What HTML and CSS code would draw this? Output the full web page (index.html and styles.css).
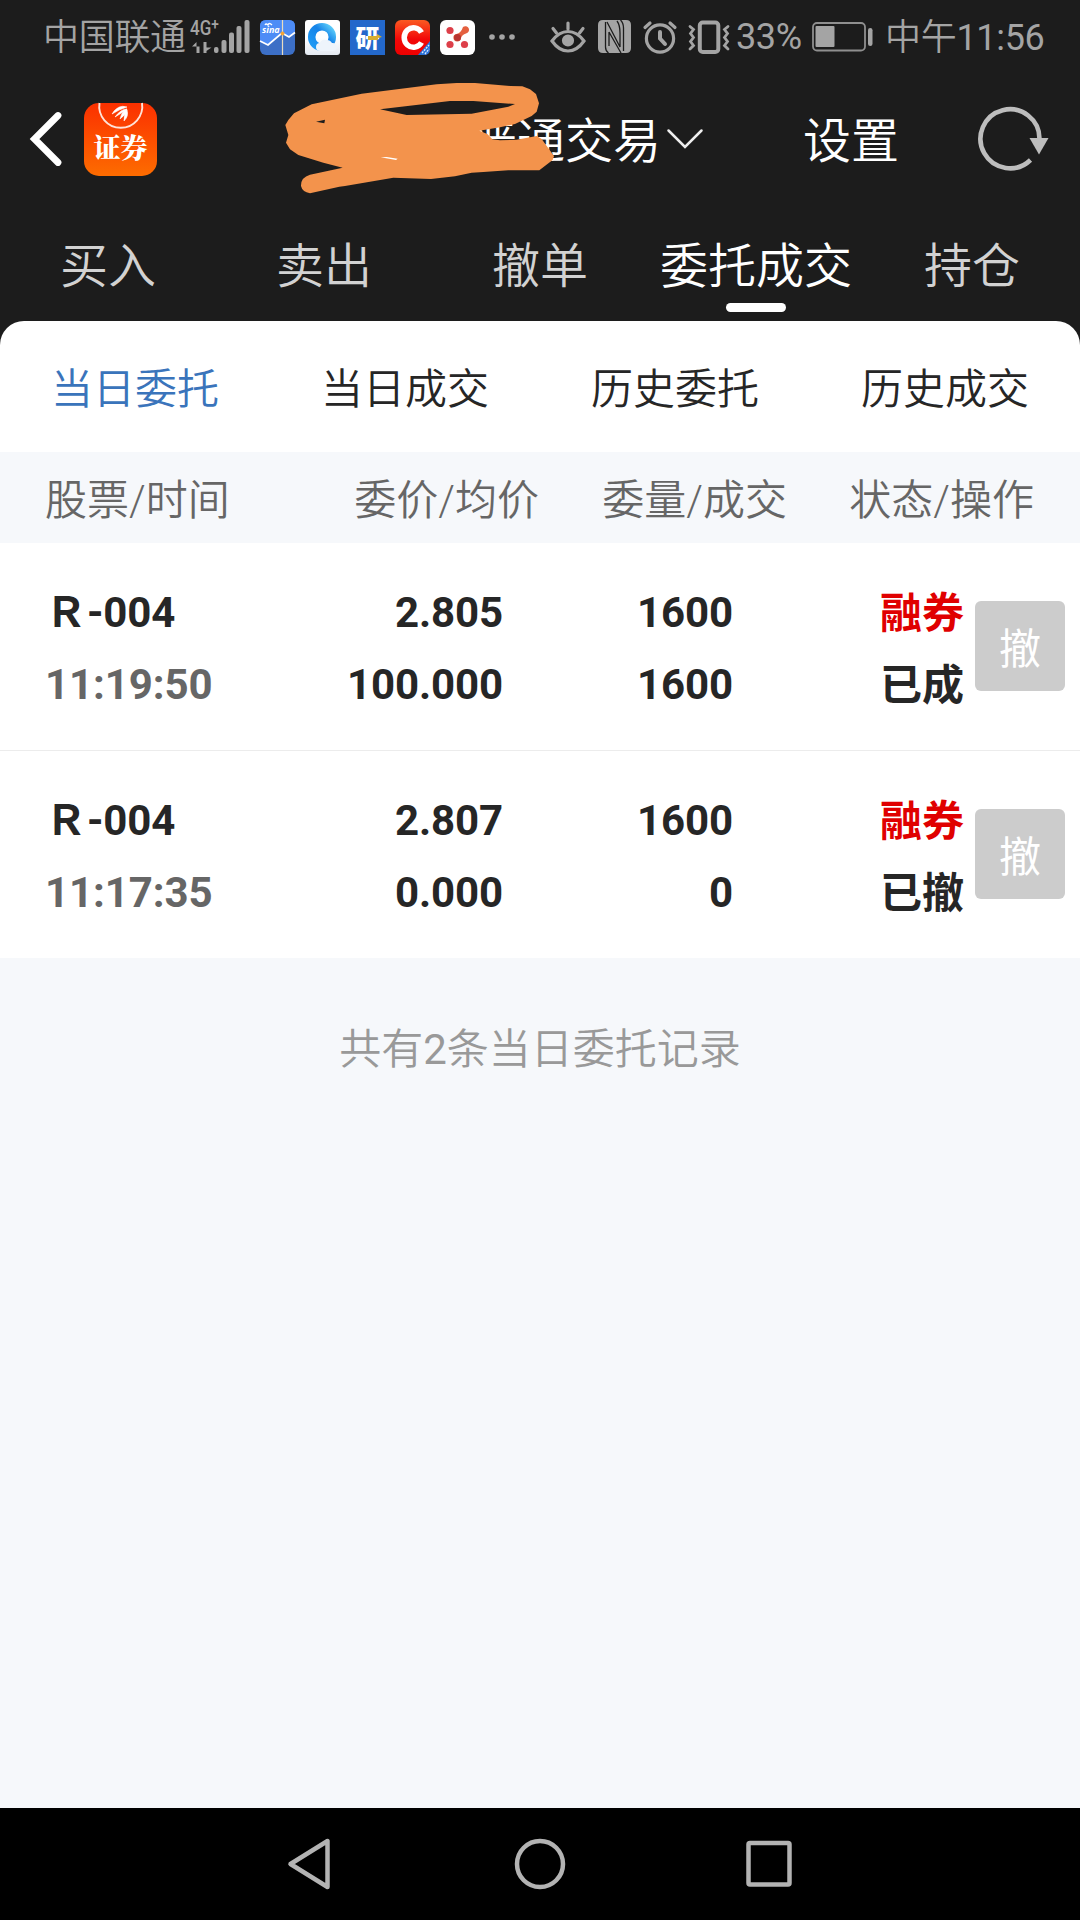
FILE: index.html
```html
<!DOCTYPE html>
<html lang="zh-CN">
<head>
<meta charset="utf-8">
<title>委托成交</title>
<link rel="stylesheet" href="styles.css">
</head>
<body>
<div class="screen">
  <header class="top">
    <div class="status">
      <div class="status-left">
        <span class="carrier">中国联通</span>
        <div class="signal">
          <span class="net">4G<sup>+</sup></span>
          <svg class="bars" width="60" height="34" viewBox="0 0 60 34">
            <path d="M6.500 22 V33 H9.500 V22Z M2 26.500 L6.500 22 H9.500 V26.500Z M13.500 22 V33 H16.500 V22Z M13.500 33 L21.500 27.500 H16.500Z" fill="#a4a4a4"/>
            <g fill="#a4a4a4"><rect x="24" y="27" width="4.500" height="6" rx="2"/><rect x="31.500" y="20" width="5" height="13" rx="2"/><rect x="39" y="12.500" width="5" height="20.500" rx="2"/><rect x="46.500" y="6" width="5" height="27" rx="2"/><rect x="54.500" y="0" width="5" height="33" rx="2"/></g>
          </svg>
        </div>
        <div class="apps">
          <svg width="35" height="35" viewBox="0 0 35 35">
            <rect width="35" height="35" rx="6" fill="#3c6fc6"/>
            <path d="M0 6 Q0 0 6 0 H29 Q35 0 35 6 V13 L28 17 L22 13 L8 25 L0 21 Z" fill="#4d8cf6"/>
            <path d="M0 21 L8 25 L22 13 L29 17 L35 12.500" fill="none" stroke="#fff" stroke-width="1.800"/>
            <path d="M22.500 0 V35" stroke="#e8dcc0" stroke-width="1.200"/><circle cx="22.500" cy="13.500" r="2" fill="#f2a43a"/>
            <text x="2" y="12.500" class="sina">sina</text><path d="M5 5 Q6 3 8 5 Q9 2 12 5" fill="none" stroke="#fff" stroke-width="1.300"/>
          </svg>
          <svg width="35" height="35" viewBox="0 0 35 35">
            <defs><linearGradient id="ring" x1="0" y1="1" x2="1" y2="0"><stop offset="0" stop-color="#1f9bf5"/><stop offset=".6" stop-color="#1683e8"/><stop offset="1" stop-color="#5fd0fa"/></linearGradient>
            <linearGradient id="haze" x1="0" y1="0" x2="0" y2="1"><stop offset=".5" stop-color="#fff"/><stop offset="1" stop-color="#e4e9f1"/></linearGradient></defs>
            <rect width="35" height="35" rx="3" fill="url(#haze)"/>
            <circle cx="17" cy="17" r="10.300" fill="none" stroke="url(#ring)" stroke-width="7.500"/>
            <path d="M15 31 a4 4 0 0 1 0-8 a5 5 0 0 1 6-3 a6 6 0 0 1 6 3 a4 4 0 0 1 1 8Z" fill="#eef4fb"/>
          </svg>
          <svg width="35" height="35" viewBox="0 0 35 35">
            <rect width="35" height="35" fill="#2368cb"/>
            <text x="5.500" y="27" class="yan">研</text>
            <path d="M18 16 H27 V14 L32 17 L28 18 V20 H18Z" fill="#d9ae2f"/>
          </svg>
          <svg width="35" height="35" viewBox="0 0 35 35">
            <defs><linearGradient id="red" x1="0" y1="0" x2="0" y2="1"><stop offset="0" stop-color="#fb5a22"/><stop offset=".55" stop-color="#f20808"/><stop offset="1" stop-color="#e00"/></linearGradient></defs>
            <rect width="35" height="35" rx="6" fill="url(#red)"/>
            <path d="M26.500 12.500 A9.300 9.800 0 1 0 26.500 22.500" fill="none" stroke="#fff" stroke-width="5.500"/>
            <path d="M35 21 V29 Q35 35 29 35 H23Z" fill="#2872d8"/><path d="M27 33 L34 25 M30 34 L34 29" stroke="#dceaff" stroke-width="1.300" stroke-dasharray="2 1"/>
          </svg>
          <svg width="35" height="35" viewBox="0 0 35 35">
            <rect width="35" height="35" rx="6" fill="#fff"/>
            <g fill="#dd3f49"><circle cx="10" cy="10.500" r="3.600"/><circle cx="10" cy="24.500" r="3.600"/><circle cx="24.500" cy="24.500" r="3.600"/></g>
            <path d="M23 7 A3.700 3.700 0 1 1 26 13.500 Q22 14.500 21 18 A3.800 3.800 0 1 1 16.500 14 Q21 13 23 7Z" fill="#e4603f"/><circle cx="17.500" cy="17.500" r="3.500" fill="#b93430"/>
          </svg>
        </div>
        <svg class="more" width="26" height="6" viewBox="0 0 26 6" fill="#a4a4a4"><circle cx="3" cy="3" r="2.800"/><circle cx="13" cy="3" r="2.800"/><circle cx="23" cy="3" r="2.800"/></svg>
      </div>
      <div class="status-right">
        <svg width="36" height="34" viewBox="0 0 36 34" fill="none" stroke="#a4a4a4" stroke-width="3.200" stroke-linecap="round"><path d="M2 21 Q9 11.500 18 11.500 T34 21 Q27 31 18 31 T2 21Z"/><circle cx="18" cy="20.500" r="4.500" fill="#a4a4a4"/><path d="M18 3 V9 M3 8.500 L6.500 13 M33 8.500 L29.500 13"/></svg>
        <svg class="nfc" width="33" height="34" viewBox="0 0 33 34"><path d="M5 0 H28 Q33 0 33 5 V28 Q33 33 28 33 H5 Q0 33 0 28 V5 Q0 0 5 0Z" fill="#a4a4a4"/><path d="M7.500 2 V27 Q7.500 31 10.500 33 M9 2 L22 27 V13 Q22 5 19 1 M22.500 0 Q25.500 3 25.500 8 V31 M11 12 L23 33 M11 12 V26" fill="none" stroke="#1c1c1c" stroke-width="1.300"/></svg>
        <svg class="alarm" width="34" height="34" viewBox="0 0 34 34" fill="none" stroke="#a4a4a4" stroke-width="3.200" stroke-linecap="round"><circle cx="17" cy="18.500" r="13.600"/><path d="M17 12 V18.500 L22 24" stroke-width="4"/><path d="M2 7.500 L7 3 M32 7.500 L27 3"/></svg>
        <svg class="vibrate" width="42" height="34" viewBox="0 0 42 34" fill="none" stroke="#a4a4a4" stroke-linecap="round"><rect x="11.800" y="2.500" width="18.500" height="29.500" rx="3" stroke-width="4"/><path d="M2 6.500 L5.500 9.500 L2.500 13.500 L5.500 17.500 L2.500 21.500 L5.500 25.500 L2 29 M40 6.500 L36.500 9.500 L39.500 13.500 L36.500 17.500 L39.500 21.500 L36.500 25.500 L40 29" stroke-width="2.800"/></svg>
        <span class="percent">33%</span>
        <svg class="battery" width="61" height="30" viewBox="0 0 61 30"><rect x="1" y="1" width="52" height="27.500" rx="4" fill="none" stroke="#8f8f8f" stroke-width="1.800"/><rect x="3.500" y="4" width="19" height="21" rx="1" fill="#a4a4a4"/><rect x="56" y="6" width="4.500" height="18" rx="2.200" fill="#a4a4a4"/></svg>
        <span class="clock">中午<span class="digits">11:56</span></span>
      </div>
    </div>

    <div class="titlebar">
      <svg class="back" width="32" height="56" viewBox="0 0 32 56"><path d="M28 4.500 L4.500 28 L28 51.500" fill="none" stroke="#fff" stroke-width="6.800" stroke-linecap="round"/></svg>
      <svg class="logo" width="73" height="73" viewBox="0 0 73 73">
        <defs><linearGradient id="brand" x1="0" y1="0" x2="0" y2="1"><stop offset="0" stop-color="#fb3000"/><stop offset="1" stop-color="#fd6c00"/></linearGradient></defs>
        <rect width="73" height="73" rx="15" fill="url(#brand)"/>
        <path d="M15.500 0 A21.500 21.500 0 1 0 58 0" fill="none" stroke="#ffe3d8" stroke-width="1.900"/>
        <path d="M28 11 Q34 1 43 4 Q36 6 28 11Z M31 14 Q37 6 43 6 Q38 10 31 14Z M36 16 Q38 8 43 6 Q42 12 36 16Z M40 18 Q40 11 43 7 Q45 13 40 18Z" fill="#fff" stroke="#fff" stroke-width=".6"/>
        <text x="36.500" y="55" text-anchor="middle" class="logo-text">证券</text>
      </svg>
      <div class="account">
        <span>普通交易</span>
        <svg width="36" height="20" viewBox="0 0 36 20"><path d="M1.500 1.500 L18 18 L34.500 1.500" fill="none" stroke="#eee" stroke-width="2.500" stroke-linecap="round"/></svg>
      </div>
      <span class="settings">设置</span>
      <svg class="refresh" width="72" height="66" viewBox="0 0 72 66"><path d="M52.500 52 A29.500 29.500 0 1 1 61.500 31" fill="none" stroke="#bdbdbd" stroke-width="4.600"/><path d="M51.500 30 H70.500 L61 46.500Z" fill="#bdbdbd"/></svg>
      <svg class="scribble" width="450" height="140" viewBox="0 0 1350 420">
        <path fill="#f3934c" fill-rule="evenodd" d="M55 150 L72 130 L125 103 L275 71 L500 43 L560 39 H615 L720 48 L757 49 L780 58 L798 72 L807 100 L800 125 L785 138 L735 162 L690 172 L628 182 L652 192 L667 208 L690 211 L740 209 L800 198 L815 207 L835 235 L852 258 L848 270 L808 301 H715 L640 306 L605 308 L555 319 L483 327 L370 323 L225 348 L208 350 L120 370 Q97 366 93 348 Q92 322 120 314 L218 293 L160 278 L85 255 L60 238 L48 218 L55 195 L46 165Z M330 118 L410 135 L605 131 L715 110 L735 102 L610 93 H540Z M138 155 L165 149 L163 160Z"/>
        <path d="M332 262 L350 261 L383 266 L378 270Z" fill="#fff"/>
      </svg>
    </div>

    <nav class="tabs">
      <span>买入</span><span>卖出</span><span>撤单</span><span class="on">委托成交</span><span>持仓</span>
    </nav>
  </header>

  <main class="panel">
    <nav class="subtabs">
      <span class="on">当日委托</span><span>当日成交</span><span>历史委托</span><span>历史成交</span>
    </nav>
    <div class="head">
      <span>股票/时间</span><span>委价/均价</span><span>委量/成交</span><span>状态/操作</span>
    </div>
    <div class="row">
      <div class="cell name"><span>Ｒ-004</span><span class="time">11:19:50</span></div>
      <div class="cell"><span>2.805</span><span>100.000</span></div>
      <div class="cell"><span>1600</span><span>1600</span></div>
      <div class="cell state"><span class="side">融券</span><span>已成</span></div>
      <button class="cancel">撤</button>
    </div>
    <div class="row">
      <div class="cell name"><span>Ｒ-004</span><span class="time">11:17:35</span></div>
      <div class="cell"><span>2.807</span><span>0.000</span></div>
      <div class="cell"><span>1600</span><span>0</span></div>
      <div class="cell state"><span class="side">融券</span><span>已撤</span></div>
      <button class="cancel">撤</button>
    </div>
  </main>
  <p class="summary">共有<span class="digits">2</span>条当日委托记录</p>

  <footer class="navbar">
    <svg width="46" height="54" viewBox="0 0 46 54"><path d="M3.500 27 L40.500 4 V50Z"/></svg>
    <svg width="54" height="54" viewBox="0 0 54 54"><circle cx="27" cy="27" r="23"/></svg>
    <svg width="46" height="54" viewBox="0 0 46 54"><rect x="1.500" y="6" width="41" height="41.500" rx="1.500"/></svg>
  </footer>
</div>
</body>
</html>
```
FILE: styles.css
```css
* { box-sizing: border-box; }
body {
  margin: 0;
  font-family: Roboto, "Noto Sans CJK SC", sans-serif;
  font-weight: 350;
}
svg { display: block; flex: none; overflow: visible; }
.digits { font-weight: 400; }
.screen {
  width: 1080px;
  height: 1920px;
  display: flex;
  flex-direction: column;
  background: #f6f8fb;
  overflow: hidden;
}
.top { background: #1c1c1c; height: 345px; flex: none; }

.status {
  height: 74px;
  display: flex;
  justify-content: space-between;
  padding: 0 35px 0 43px;
  color: #a4a4a4;
  font-size: 36px;
  line-height: 74px;
}
.status-left, .status-right { display: flex; align-items: center; }
.carrier { width: 147px; padding-top: 2px; letter-spacing: -0.3px; white-space: nowrap; }
.signal { width: 60px; height: 34px; position: relative; }
.net {
  position: absolute;
  left: 0;
  top: -1px;
  font: 500 20px/18px Roboto, sans-serif;
  transform: scaleX(.85);
  transform-origin: left;
  white-space: nowrap;
}
.net sup { font-size: 16px; line-height: 0; vertical-align: 5px; }
.apps { display: flex; gap: 10px; margin-left: 10px; }
.sina { font: italic 700 9px "Open Sans", sans-serif; fill: #fff; }
.yan { font: 900 24px "Noto Sans CJK SC", sans-serif; fill: #fff; }
.more { margin-left: 14px; }
.nfc { margin-left: 12px; }
.alarm { margin-left: 12px; }
.vibrate { margin-left: 11px; }
.percent { margin-left: 6px; width: 68px; letter-spacing: -0.4px; font-weight: 400; }
.battery { margin-left: 8px; }
.clock { margin-left: 12px; width: 160px; padding-top: 2px; letter-spacing: -0.3px; white-space: nowrap; }

.titlebar {
  position: relative;
  height: 130px;
  display: flex;
  align-items: center;
  padding: 0 0 0 30px;
  color: #fff;
  font-size: 48px;
  line-height: 60px;
}
.logo { margin-left: 22px; }
.logo-text { font: 900 27px "Noto Serif CJK SC", "Noto Sans CJK SC", serif; fill: #fff; }
.account { display: flex; align-items: center; gap: 6px; margin-left: 312px; flex: none; }
.account span, .settings { padding-top: 6px; white-space: nowrap; flex: none; }
.settings { margin-left: 100px; }
.refresh { margin: 4px 0 0 79px; }
.scribble { position: absolute; left: 270px; top: -4px; }

.tabs {
  display: grid;
  grid-template-columns: repeat(5, 1fr);
  height: 117px;
  color: #d2d2d2;
  font-size: 48px;
  line-height: 126px;
  text-align: center;
}
.tabs .on { position: relative; color: #fff; }
.tabs .on::after {
  content: "";
  position: absolute;
  left: 78px;
  top: 99px;
  width: 60px;
  height: 9px;
  border-radius: 5px;
  background: #fff;
}

.panel {
  margin-top: -24px;
  border-radius: 24px 24px 0 0;
  background: #fff;
  overflow: hidden;
}
.subtabs {
  display: grid;
  grid-template-columns: repeat(4, 1fr);
  height: 131px;
  color: #262626;
  font-size: 42px;
  line-height: 138px;
  text-align: center;
}
.subtabs .on { color: #3a74bb; }
.head {
  display: grid;
  grid-template-columns: 291px 248px 248px 247px;
  height: 91px;
  background: #f6f8fb;
  color: #666;
  font-size: 42px;
  line-height: 98px;
  text-align: right;
}
.head span:first-child { text-align: left; padding-left: 45px; }
.row {
  display: grid;
  grid-template-columns: 259px 244px 230px 231px 90px;
  height: 208px;
  padding-top: 34px;
  border-bottom: 1px solid #ececec;
  color: #262626;
  font-size: 42px;
  font-weight: 700;
}
.row:last-child { border-bottom: 0; height: 207px; }
.cell { display: flex; flex-direction: column; text-align: right; line-height: 72px; letter-spacing: -0.1px; }
.name { text-align: left; padding-left: 45px; }
.state { padding-top: 1px; letter-spacing: 0; }
.time { color: #666; }
.side { color: #e00000; }
.cancel {
  width: 90px;
  height: 90px;
  margin: 24px 0 0 11px;
  padding: 0;
  border: 0;
  border-radius: 6px;
  background: #ccc;
  color: #fff;
  font: 400 42px/90px "Noto Sans CJK SC", sans-serif;
}
.summary {
  flex: 1;
  margin: 0;
  padding-top: 62px;
  color: #999;
  font-size: 42px;
  line-height: 60px;
  text-align: center;
}
.navbar {
  height: 112px;
  flex: none;
  display: flex;
  align-items: center;
  justify-content: center;
  gap: 180px;
  background: #000;
}
.navbar svg { fill: none; stroke: #b3b3b3; stroke-width: 4.5; stroke-linejoin: round; }
```
